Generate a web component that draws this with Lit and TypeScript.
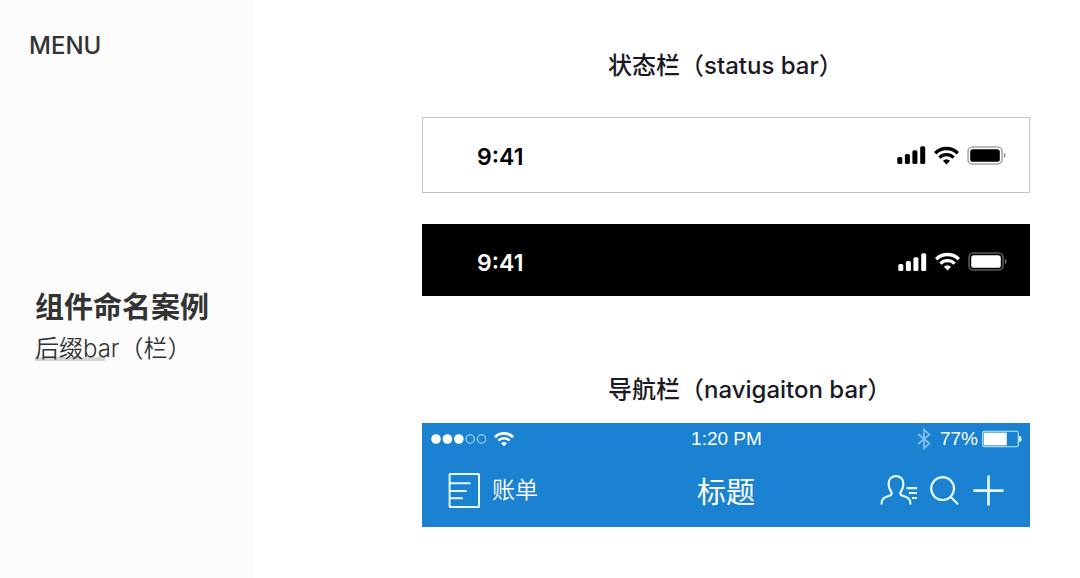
import { LitElement, html, css, svg } from "lit";
import { customElement, property } from "lit/decorators.js";

const wifi = svg`
  <path d="M1.2 7.2 A16 16 0 0 1 23.8 7.2" fill="none" stroke="currentColor" stroke-width="3.5"/>
  <path d="M5.4 11.6 A10 10 0 0 1 19.6 11.6" fill="none" stroke="currentColor" stroke-width="3.2"/>
  <path d="M8.9 14.8 Q12.5 11.8 16.1 14.8 L12.5 18.6 Z" fill="currentColor"/>`;

@customElement("status-bar")
export class StatusBar extends LitElement {
  @property() time = "9:41";

  static styles = css`
    :host {
      display: flex;
      align-items: center;
      justify-content: space-between;
      padding: 0 23px 0 54px;
      box-sizing: border-box;
      font: 600 23px/28px Inter, "Liberation Sans", sans-serif;
    }
    time {
      padding-top: 3px;
    }
    .icons {
      display: flex;
      align-items: center;
      gap: 8px;
    }
    svg {
      display: block;
    }
  `;

  render() {
    return html`
      <time>${this.time}</time>
      <div class="icons">
        <svg width="29" height="18" viewBox="0 0 29 18" fill="currentColor" role="img" aria-label="Signal">
          <rect x="0.3" y="11" width="5" height="7" rx="1.6" />
          <rect x="7.9" y="8" width="5" height="10" rx="1.6" />
          <rect x="15.4" y="4.2" width="5" height="13.8" rx="1.6" />
          <rect x="23.2" y="0.2" width="5" height="17.8" rx="1.6" />
        </svg>
        <svg width="25" height="19" viewBox="0 0 25 19" role="img" aria-label="Wi-Fi">${wifi}</svg>
        <svg width="39" height="19" viewBox="0 0 39 19" role="img" aria-label="Battery">
          <rect x="1" y="1" width="34" height="17" rx="4.5" fill="none" stroke="currentColor" stroke-opacity="0.35" stroke-width="1.6" />
          <rect x="3.2" y="3.2" width="29.6" height="12.6" rx="2.6" fill="currentColor" />
          <path d="M36.8 6.8 Q38.8 7.6 38.8 9.5 Q38.8 11.4 36.8 12.2 Z" fill="currentColor" fill-opacity="0.4" />
        </svg>
      </div>
    `;
  }
}

@customElement("navigation-bar")
export class NavigationBar extends LitElement {
  static styles = css`
    :host {
      display: block;
      color: #fff;
      background: #1b82d2;
      font-family: "Liberation Sans", "Noto Sans CJK SC", sans-serif;
    }
    .row {
      display: grid;
      grid-template-columns: 1fr auto 1fr;
      align-items: center;
    }
    .status {
      padding: 0 8px 0 9px;
      font-size: 19px;
      line-height: 32px;
    }
    .main {
      height: 72px;
      padding: 0 26px;
    }
    .side {
      display: flex;
      align-items: center;
    }
    .end {
      justify-content: flex-end;
    }
    .carrier {
      gap: 8px;
    }
    .power {
      gap: 4px;
    }
    .bluetooth {
      margin-right: 5px;
    }
    .actions {
      gap: 12px;
    }
    .title {
      margin: 0;
      padding-bottom: 2px;
      font: 400 29px/40px "Noto Sans CJK SC", sans-serif;
    }
    button {
      display: flex;
      align-items: center;
      gap: 11px;
      padding: 0;
      border: 0;
      background: none;
      color: inherit;
      font: 350 23px/32px "Noto Sans CJK SC", sans-serif;
      cursor: pointer;
    }
    .label {
      padding-bottom: 6px;
    }
    svg {
      display: block;
    }
  `;

  render() {
    return html`
      <div class="row status">
        <div class="side carrier">
          <svg width="55" height="12" viewBox="0 0 55 12" role="img" aria-label="Signal">
            ${[0, 1, 2].map((i) => svg`<circle cx=${5 + i * 11.4} cy="6" r="4.8" fill="#fff"/>`)}
            ${[3, 4].map(
              (i) => svg`<circle cx=${5 + i * 11.4} cy="6" r="4.2" fill="none" stroke="#bfe4ff" stroke-width="1.1"/>`
            )}
          </svg>
          <svg width="20" height="16" viewBox="0 0 25 19" role="img" aria-label="Wi-Fi">${wifi}</svg>
        </div>
        <time>1:20 PM</time>
        <div class="side end power">
          <svg class="bluetooth" width="14" height="22" viewBox="0 0 14 22" fill="none" stroke="#83c0f0" stroke-width="1.7" role="img" aria-label="Bluetooth">
            <path d="M1.2 6 L12.4 15.6 L7 20.3 V1.7 L12.4 6.4 L1.2 16" />
          </svg>
          <span>77%</span>
          <svg width="40" height="18" viewBox="0 0 40 18" role="img" aria-label="Battery">
            <rect x="0.7" y="1.2" width="35.6" height="15.6" rx="1.6" fill="none" stroke="#c6ecff" stroke-width="1.1" />
            <rect x="1.8" y="2.6" width="23" height="12.8" fill="#fff" />
            <path d="M37 6 Q39.6 6 39.6 9 Q39.6 12 37 12 Z" fill="#e4f6ff" />
          </svg>
        </div>
      </div>
      <div class="row main">
        <div class="side">
          <button type="button">
            <svg width="33" height="36" viewBox="0 0 33 36" fill="none" stroke="#e6faff" stroke-width="2" role="presentation">
              <rect x="1.6" y="1" width="29.4" height="33" rx="0.6" />
              <path d="M2 10.2 H22.5 M2 17.9 H18.6 M2 25.2 H14.8" />
            </svg>
            <span class="label">账单</span>
          </button>
        </div>
        <h3 class="title">标题</h3>
        <div class="side end actions">
          <button type="button" aria-label="Contacts">
            <svg width="38" height="32" viewBox="0 0 38 32" fill="none" stroke="#e6faff" stroke-width="2.2">
              <path d="M1.5 29.5 C1.3 25 3 23 6.5 21.8 L10 20.4 C12.4 19.4 12 18 10.8 16.2 C9.3 14 8.6 12 8.6 9 C8.6 4.2 11.6 1.2 16 1.2 C20.4 1.2 23.4 4.2 23.4 9 C23.4 12 22.7 14 21.2 16.2 C20 18 19.6 19.4 22 20.4 L25.5 21.8 C29 23 30.7 25 30.5 29.5" />
              <path d="M26.5 13.2 H37 M29 18 H37 M32 23 H37" />
            </svg>
          </button>
          <button type="button" aria-label="Search">
            <svg width="30" height="30" viewBox="0 0 30 30" fill="none" stroke="#e6faff" stroke-width="2.2">
              <circle cx="12.6" cy="12.6" r="11.4" />
              <path d="M20.8 21 L28 28.2" />
            </svg>
          </button>
          <button type="button" aria-label="Add">
            <svg width="32" height="32" viewBox="0 0 32 32" fill="none" stroke="#e6faff" stroke-width="2.6">
              <path d="M1.5 15.6 H31.5 M16.5 0.6 V30.6" />
            </svg>
          </button>
        </div>
      </div>
    `;
  }
}

@customElement("app-root")
export class AppRoot extends LitElement {
  static styles = css`
    :host {
      display: grid;
      grid-template-columns: 253px 1fr;
      min-height: 100vh;
      background: #fff;
      font-family: Inter, "Noto Sans CJK SC", sans-serif;
    }
    .sidebar {
      display: flex;
      flex-direction: column;
      padding: 30px 29px;
      background: #fcfcfc;
      color: #333;
    }
    .menu {
      margin: 0;
      font-size: 24px;
      line-height: 32px;
      font-weight: 500;
    }
    .topic {
      padding: 223px 0 0 6px;
    }
    .topic-title {
      margin: 0;
      font: 700 29px/40px "Noto Sans CJK SC", sans-serif;
    }
    .topic-sub {
      margin: 7px 0 0;
      font: 350 24px/34px Inter, "Noto Sans CJK SC", sans-serif;
      white-space: nowrap;
    }
    .mark {
      display: inline-block;
      background: linear-gradient(#d4d4d4, #d4d4d4) 0 25px / 70px 4px no-repeat;
    }
    .content {
      padding: 49px 50px 48px 169px;
    }
    .heading {
      margin: 0;
      padding-left: 186px;
      color: #1a1a24;
      font-size: 24px;
      line-height: 34px;
      font-weight: 500;
      white-space: nowrap;
    }
    .light {
      height: 76px;
      margin-top: 34px;
      border: 1px solid #c4c4c4;
      color: #000;
    }
    .dark {
      height: 72px;
      margin-top: 31px;
      padding-top: 3px;
      padding-left: 55px;
      background: #000;
      color: #fff;
    }
    .second {
      margin-top: 77px;
    }
    .nav {
      margin-top: 16px;
    }
  `;

  render() {
    return html`
      <aside class="sidebar">
        <p class="menu">MENU</p>
        <div class="topic">
          <h1 class="topic-title">组件命名案例</h1>
          <p class="topic-sub"><span class="mark">后缀bar（栏）</span></p>
        </div>
      </aside>
      <main class="content">
        <h2 class="heading">状态栏（status bar）</h2>
        <status-bar class="light"></status-bar>
        <status-bar class="dark"></status-bar>
        <h2 class="heading second">导航栏（navigaiton bar）</h2>
        <navigation-bar class="nav"></navigation-bar>
      </main>
    `;
  }
}
